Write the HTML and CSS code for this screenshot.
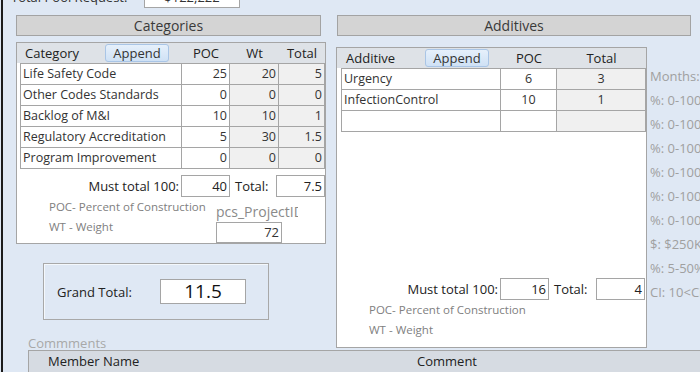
FILE: index.html
```html
<!DOCTYPE html>
<html lang="en">
<head>
  <meta charset="UTF-8" />
  <title>Project Scoring</title>
  <link rel="stylesheet" href="styles.css">
</head>
<body>

  <div class="form">

    <!-- pool request (scrolled off the top) -->
    <div class="pool-row">
      <span class="pool-label">Total Pool Request:</span>
      <span class="pool-box">$122,222</span>
    </div>

    <div class="main">

      <!-- categories -->
      <div class="left-col">
        <div class="section-bar cat-bar">Categories</div>

        <div class="subform cat-form">
          <div class="sub-head cat-cols">
            <div class="head-first"><span class="cat-title">Category</span><button class="append">Append</button></div>
            <div class="head-cell">POC</div>
            <div class="head-cell">Wt</div>
            <div class="head-cell">Total</div>
          </div>
          <div class="grid cat-cols" id="cat-rows"></div>

          <div class="foot-row">
            <span class="must-label cat-must">Must total 100:</span>
            <span class="val-box">40</span>
            <span class="total-label">Total:</span>
            <span class="val-box">7.5</span>
          </div>
          <div class="cat-notes">
            <div class="notes">
              <div>POC- Percent of Construction</div>
              <div>WT - Weight</div>
            </div>
            <div class="pcs">
              <div class="pcs-label">pcs_ProjectID</div>
              <div class="pcs-box">72</div>
            </div>
          </div>
        </div>

        <div class="grand">
          <span class="grand-label">Grand Total:</span>
          <span class="grand-box">11.5</span>
        </div>

        <div class="comments-label">Commments</div>
      </div>

      <!-- additives -->
      <div class="right-col">
        <div class="section-bar add-bar">Additives</div>
        <div class="add-row">
          <div class="subform add-form">
            <div class="sub-head add-cols">
              <div class="head-first"><span class="add-title">Additive</span><button class="append">Append</button></div>
              <div class="head-cell">POC</div>
              <div class="head-cell">Total</div>
            </div>
            <div class="grid add-cols" id="add-rows"></div>

            <div class="add-foot">
              <div class="foot-row">
                <span class="must-label add-must">Must total 100:</span>
                <span class="val-box">16</span>
                <span class="total-label add-total">Total:</span>
                <span class="val-box">4</span>
              </div>
              <div class="notes add-notes">
                <div>POC- Percent of Construction</div>
                <div>WT - Weight</div>
              </div>
            </div>
          </div>

          <div class="hints">
            <div>Months: 0-60</div>
            <div>%: 0-100%</div>
            <div>%: 0-100%</div>
            <div>%: 0-100%</div>
            <div>%: 0-100%</div>
            <div>%: 0-100%</div>
            <div>%: 0-100%</div>
            <div>$: $250K+</div>
            <div>%: 5-50%</div>
            <div>CI: 10&lt;CI</div>
          </div>
        </div>
      </div>

    </div>

    <!-- comments list header -->
    <div class="member-bar">
      <span class="member-col">Member Name</span>
      <span>Comment</span>
    </div>

  </div>

  <script>
    const categories = [
      ["Life Safety Code", 25, 20, 5],
      ["Other Codes Standards", 0, 0, 0],
      ["Backlog of M&I", 10, 10, 1],
      ["Regulatory Accreditation", 5, 30, 1.5],
      ["Program Improvement", 0, 0, 0]
    ];

    const additives = [
      ["Urgency", 6, 3],
      ["InfectionControl", 10, 1],
      ["", "", ""] // new record row
    ];

    function addCell(parent, text, cls) {
      const div = document.createElement("div");
      div.className = "cell " + cls;
      div.textContent = text;
      parent.appendChild(div);
    }

    const catRows = document.getElementById("cat-rows");
    categories.forEach(row => {
      addCell(catRows, row[0], "");
      addCell(catRows, row[1], "num");
      addCell(catRows, row[2], "num shade");
      addCell(catRows, row[3], "num shade");
    });

    const addRows = document.getElementById("add-rows");
    additives.forEach(row => {
      addCell(addRows, row[0], "");
      addCell(addRows, row[1], "mid");
      addCell(addRows, row[2], "mid shade");
    });
  </script>

</body>
</html>
```

FILE: styles.css
```css
body {
  margin: 0;
  padding-left: 1px;
  background-color: #dfe8f4;
  font-family: "Open Sans", "Noto Sans", Arial, sans-serif;
  font-size: 12px;
  color: #333;
  overflow: hidden;
}

.form {
  width: 697px;
  height: 372px;
  border-left: 2px solid #1b1b1b;
  overflow: hidden;
}

/* top row, mostly cut off */
.pool-row {
  display: flex;
  align-items: center;
  height: 22px;
  margin-top: -14px;
  padding-left: 8px;
}

.pool-label {
  width: 133px;
  font-size: 13px;
}

.pool-box {
  width: 96px;
  height: 22px;
  box-sizing: border-box;
  background: white;
  border: 1px solid #a5a5a5;
  text-align: center;
  line-height: 20px;
  font-size: 13px;
}

.main {
  display: flex;
  margin-top: 7px;
  padding-left: 13px;
}

.left-col {
  width: 310px;
  flex-shrink: 0;
}

.right-col {
  margin-left: 10px;
  flex-shrink: 0;
}

.section-bar {
  height: 21px;
  box-sizing: border-box;
  border: 1px solid #a3a3a3;
  background-color: #d4d4d4;
  text-align: center;
  line-height: 19px;
  font-size: 14px;
  color: #3a3a3a;
}

.cat-bar {
  width: 305px;
}

.add-bar {
  width: 354px;
  margin-left: 1px;
}

.subform {
  background: white;
  border: 1px solid #a5a5a5;
  box-sizing: border-box;
  flex-shrink: 0;
}

.cat-form {
  width: 310px;
  margin-top: 6px;
}

.sub-head {
  display: grid;
  height: 20px;
  background-color: #dee2e7;
  align-items: center;
  font-size: 13px;
  color: #222;
}

.cat-cols {
  grid-template-columns: 161px 48px 49px 46px;
  margin-left: 3px;
  padding-left: 1px;
}

.add-cols {
  grid-template-columns: 159px 56px 89px;
  margin-left: 4px;
  padding-left: 1px;
}

.sub-head.cat-cols,
.sub-head.add-cols {
  margin-left: 0;
}

.sub-head.cat-cols {
  padding-left: 4px;
}

.sub-head.add-cols {
  padding-left: 5px;
}

.head-first {
  display: flex;
  align-items: center;
  padding-left: 4px;
}

.cat-title {
  width: 80px;
}

.add-title {
  width: 79px;
}

.head-cell {
  text-align: center;
}

.append {
  width: 64px;
  height: 18px;
  padding: 0;
  border: 1px solid #a9c5e6;
  border-radius: 3px;
  background: linear-gradient(#e6f0fb, #cfe1f5);
  font-family: inherit;
  font-size: 13px;
  color: #333;
  line-height: 16px;
}

.grid {
  display: grid;
  border-top: 1px solid #a5a5a5;
  border-left: 1px solid #a5a5a5;
  padding-left: 0;
}

.cell {
  height: 21px;
  box-sizing: border-box;
  border-right: 1px solid #a5a5a5;
  border-bottom: 1px solid #a5a5a5;
  padding: 0 2px;
  line-height: 20px;
  white-space: nowrap;
  overflow: hidden;
  font-size: 12.5px;
}

.num {
  text-align: right;
}

.mid {
  text-align: center;
}

.shade {
  background-color: #f0f0f0;
}

.foot-row {
  display: flex;
  align-items: center;
  height: 22px;
  margin-top: 6px;
  font-size: 13px;
  color: #222;
}

.must-label {
  text-align: right;
  padding-right: 2px;
  box-sizing: border-box;
}

.cat-must {
  width: 164px;
}

.val-box {
  width: 49px;
  height: 22px;
  box-sizing: border-box;
  border: 1px solid #a5a5a5;
  text-align: right;
  padding-right: 2px;
  line-height: 20px;
}

.total-label {
  width: 46px;
  padding-left: 5px;
  box-sizing: border-box;
}

.cat-notes {
  display: flex;
}

.notes {
  width: 199px;
  padding-left: 32px;
  box-sizing: border-box;
  line-height: 20px;
  font-size: 11.5px;
  color: #808080;
}

.pcs {
  padding-top: 5px;
}

.pcs-label {
  width: 82px;
  overflow: hidden;
  white-space: nowrap;
  line-height: 20px;
  font-size: 14px;
  color: #8a8a8a;
}

.pcs-box {
  width: 66px;
  height: 21px;
  box-sizing: border-box;
  border: 1px solid #a5a5a5;
  text-align: right;
  padding-right: 2px;
  line-height: 19px;
  font-size: 13px;
}

.grand {
  display: flex;
  align-items: center;
  width: 226px;
  height: 57px;
  box-sizing: border-box;
  margin: 19px 0 0 27px;
  padding-left: 13px;
  border: 1px solid #a8a8a8;
  box-shadow: inset 1px 1px 0 #f4f8fc;
}

.grand-label {
  width: 103px;
  font-size: 13px;
  color: #222;
}

.grand-box {
  width: 86px;
  height: 25px;
  box-sizing: border-box;
  background: white;
  border: 1px solid #a5a5a5;
  text-align: center;
  line-height: 23px;
  font-size: 19px;
  color: #111;
}

.comments-label {
  margin: 16px 0 0 12px;
  line-height: 14px;
  font-size: 13px;
  color: #a8a8a8;
}

.add-row {
  display: flex;
  margin-top: 11px;
}

.add-form {
  display: flex;
  flex-direction: column;
  width: 311px;
  height: 301px;
}

.add-foot {
  margin-top: auto;
  padding-bottom: 7px;
}

.add-must {
  width: 163px;
}

.add-total {
  width: 47px;
}

.add-notes {
  width: auto;
}

.hints {
  margin-left: 3px;
  padding-top: 17px;
  line-height: 24px;
  font-size: 13px;
  color: #a0a0a0;
  white-space: nowrap;
}

.member-bar {
  display: flex;
  height: 22px;
  margin-left: 25px;
  box-sizing: border-box;
  background-color: #d6dbe2;
  border-top: 1px solid #a5a5a5;
  border-left: 1px solid #a5a5a5;
  line-height: 21px;
  font-size: 13px;
  color: #222;
}

.member-col {
  width: 369px;
  padding-left: 19px;
}
```
